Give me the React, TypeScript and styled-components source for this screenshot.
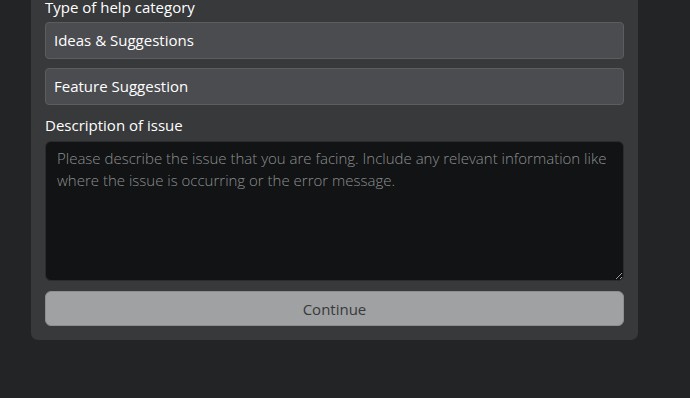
import React from "react";
import styled, { createGlobalStyle } from "styled-components";

const Global = createGlobalStyle`
  html, body {
    margin: 0;
    padding: 0;
    background: #232426;
    overflow: hidden;
  }
  * { box-sizing: border-box; }
`;

const Page = styled.div`
  width: 690px;
  height: 398px;
  background: #232426;
  padding-left: 31px;
  font-family: "Open Sans", "Noto Sans", sans-serif;
`;

const Panel = styled.form`
  width: 607px;
  background: #38393b;
  border-radius: 0 0 7px 7px;
  padding: 0 14px 14px 14px;
  display: flex;
  flex-direction: column;
`;

const Label = styled.label<{ $gap: number }>`
  display: block;
  color: #ffffff;
  font-size: 15px;
  font-weight: 500;
  line-height: 14px;
  margin-bottom: ${(p) => p.$gap}px;
`;

const Field = styled.div<{ $gap: number }>`
  height: 37px;
  border: 1px solid #5c5d61;
  border-radius: 4px;
  background: #4b4c50;
  color: #ffffff;
  font-size: 15px;
  font-weight: 500;
  line-height: 35px;
  padding-left: 8px;
  margin-bottom: ${(p) => p.$gap}px;
`;

const TextArea = styled.textarea`
  display: block;
  width: 100%;
  height: 140px;
  margin: 0 0 10px 0;
  border: 1px solid #2b2c2e;
  border-radius: 6px;
  background: #111314;
  color: #e0e0e0;
  font-family: "Open Sans", "Noto Sans", sans-serif;
  font-size: 15px;
  font-weight: 300;
  line-height: 22px;
  padding: 5px 11px;
  resize: vertical;
  outline: none;
  &::placeholder {
    color: #8d8e90;
    opacity: 1;
  }
`;

const Button = styled.button`
  height: 35px;
  width: 100%;
  border: 1px solid #8d8e90;
  border-radius: 6px;
  background: #a0a1a3;
  color: #38393b;
  font-family: "Open Sans", "Noto Sans", sans-serif;
  font-size: 15px;
  font-weight: 500;
  cursor: not-allowed;
`;

export default function App() {
  return (
    <>
      <Global />
      <Page>
        <Panel onSubmit={(e) => e.preventDefault()}>
          <Label $gap={8}>Type of help category</Label>
          <Field $gap={9}>Ideas &amp; Suggestions</Field>
          <Field $gap={13}>Feature Suggestion</Field>
          <Label $gap={9}>Description of issue</Label>
          <TextArea placeholder="Please describe the issue that you are facing. Include any relevant information like where the issue is occurring or the error message." />
          <Button type="button">Continue</Button>
        </Panel>
      </Page>
    </>
  );
}
